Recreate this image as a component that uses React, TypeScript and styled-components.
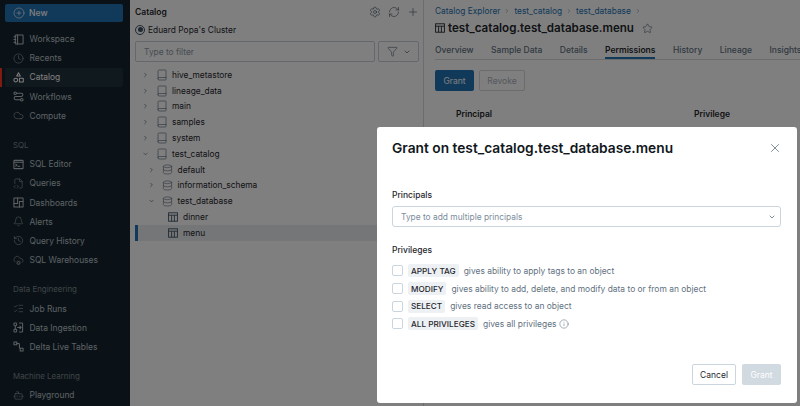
import { createGlobalStyle } from "styled-components";
import styled from "styled-components";
import {
  Bell,
  Book,
  Bot,
  ChevronDown,
  ChevronRight,
  CirclePlus,
  Clock,
  Cloud,
  CloudCog,
  Database,
  FileCode2,
  Filter,
  History,
  Info,
  ListChecks,
  Plus,
  RefreshCw,
  Settings,
  Star,
  X,
} from "lucide-react";
import type { ReactNode } from "react";

const GlobalStyle = createGlobalStyle`
  html, body { margin: 0; padding: 0; background: #fff; }
  body { font-family: Inter, "Liberation Sans", sans-serif; color: #1f272d; }
  * { box-sizing: border-box; }
`;

const Page = styled.div`
  position: relative;
  width: 800px;
  height: 406px;
  overflow: hidden;
  display: grid;
  grid-template-columns: 130px 294px 1fr;
`;

const Sidebar = styled.nav`
  background: #14252f;
  padding: 4px 7px 0 5px;
  display: flex;
  flex-direction: column;
  color: #fff;
`;

const NewButton = styled.div`
  height: 18px;
  flex: none;
  border-radius: 2px;
  background: #2272b4;
  display: flex;
  align-items: center;
  gap: 4px;
  padding-left: 8px;
  font-size: 8.6px;
  font-weight: 500;
  margin-bottom: 7.5px;
`;

const NavItem = styled.div<{ $active?: boolean }>`
  position: relative;
  height: 19.2px;
  flex: none;
  display: flex;
  align-items: center;
  gap: 5.5px;
  padding-left: 8px;
  font-size: 8.45px;
  border-radius: 2px;
  background: ${(p) => (p.$active ? "#21323d" : "transparent")};
  color: ${(p) => (p.$active ? "#ffffff" : "#bcc2c7")};

  &::before {
    content: "";
    display: ${(p) => (p.$active ? "block" : "none")};
    position: absolute;
    left: -5px;
    top: 0;
    bottom: 0;
    width: 1.5px;
    background: #ff3621;
  }
`;

const NavHeading = styled.div`
  height: 19px;
  flex: none;
  margin-top: 10.2px;
  padding-left: 8px;
  display: flex;
  align-items: center;
  font-size: 7.9px;
  color: #808890;
`;

const CatalogPanel = styled.section`
  border-right: 1px solid #d4d8db;
  background: #fff;
  display: flex;
  flex-direction: column;
  padding-top: 5px;
`;

const PanelHeader = styled.div`
  height: 14px;
  margin: 0 4px 0 5px;
  display: flex;
  align-items: center;
  justify-content: space-between;
`;

const PanelTitle = styled.h2`
  margin: 0;
  font-size: 8.5px;
  font-weight: 600;
`;

const PanelTools = styled.div`
  display: flex;
  gap: 7px;
  color: #3d5263;
`;

const ClusterRow = styled.div`
  margin: 3px 5px 0;
  height: 15px;
  display: flex;
  align-items: center;
  gap: 3px;
  font-size: 8.4px;
`;

const ClusterDot = styled.span`
  width: 10px;
  height: 10px;
  border-radius: 50%;
  border: 1px solid #3d5263;
  display: flex;
  align-items: center;
  justify-content: center;

  &::after {
    content: "";
    width: 5px;
    height: 5px;
    border-radius: 50%;
    background: #3d5263;
  }
`;

const FilterRow = styled.div`
  margin: 4px 4px 0 5px;
  display: flex;
  gap: 3px;
`;

const FilterInput = styled.div`
  flex: 1;
  height: 21px;
  border: 1px solid #c9d1d8;
  border-radius: 2px;
  padding-left: 8px;
  display: flex;
  align-items: center;
  font-size: 8.4px;
  color: #8a9aa8;
`;

const FilterButton = styled.div`
  width: 41px;
  height: 21px;
  border: 1px solid #c9d1d8;
  border-radius: 2px;
  display: flex;
  align-items: center;
  justify-content: center;
  gap: 5px;
  color: #3d5263;
`;

const Tree = styled.div`
  margin-top: 5px;
  display: flex;
  flex-direction: column;
`;

const TreeRow = styled.div<{ $depth: number; $selected?: boolean }>`
  position: relative;
  height: 15.8px;
  display: flex;
  align-items: center;
  padding-left: ${(p) => 7 + p.$depth * 5.5}px;
  font-size: 8.4px;
  background: ${(p) => (p.$selected ? "#eaedf0" : "transparent")};
  margin-left: 5px;

  &::before {
    content: "";
    display: ${(p) => (p.$selected ? "block" : "none")};
    position: absolute;
    left: 0;
    top: 0;
    bottom: 0;
    width: 3px;
    background: #2272b4;
  }
`;

const TreeChevron = styled.span`
  width: 7px;
  flex: none;
  display: flex;
  justify-content: center;
  color: #3d5263;
  margin-right: 6px;
`;

const TreeIcon = styled.span`
  width: 13px;
  flex: none;
  display: flex;
  justify-content: center;
  color: #3d5263;
  margin-right: 4px;
`;

const DetailPanel = styled.main`
  background: #fff;
  padding: 4px 0 0 11px;
  min-width: 0;
  display: flex;
  flex-direction: column;
`;

const Crumbs = styled.div`
  height: 14px;
  display: flex;
  align-items: center;
  gap: 4px;
  font-size: 8.35px;
  color: #2272b4;
`;

const CrumbSep = styled.span`
  display: flex;
  color: #5f7281;
`;

const TitleRow = styled.div`
  height: 20px;
  display: flex;
  align-items: center;
  gap: 3px;
`;

const PageTitle = styled.h1`
  margin: 0;
  font-size: 11.6px;
  font-weight: 600;
  margin-right: 5px;
  white-space: nowrap;
`;

const Tabs = styled.div`
  margin-top: 3px;
  height: 19px;
  display: flex;
  gap: 17.5px;
  border-bottom: 1px solid #d4d8db;
  overflow: hidden;
`;

const Tab = styled.div<{ $active?: boolean }>`
  height: 18px;
  padding-top: 2px;
  display: flex;
  align-items: center;
  font-size: 8.5px;
  font-weight: ${(p) => (p.$active ? 600 : 500)};
  color: ${(p) => (p.$active ? "#1f272d" : "#5f7281")};
  border-bottom: ${(p) => (p.$active ? "2px solid #2272b4" : "2px solid transparent")};
  white-space: nowrap;
`;

const Actions = styled.div`
  margin-top: 10px;
  display: flex;
  gap: 5px;
`;

const PrimaryButton = styled.div`
  width: 39px;
  height: 21px;
  border-radius: 2px;
  background: #2272b4;
  color: #fff;
  display: flex;
  align-items: center;
  justify-content: center;
  font-size: 8.5px;
`;

const DisabledOutline = styled.div`
  width: 46px;
  height: 21px;
  border-radius: 2px;
  border: 1px solid #d4d8db;
  color: #a8b2ba;
  display: flex;
  align-items: center;
  justify-content: center;
  font-size: 8.5px;
`;

const TableHead = styled.div`
  margin-top: 18px;
  padding-left: 21px;
  display: grid;
  grid-template-columns: 238px 1fr;
  font-size: 8.5px;
  font-weight: 600;
`;

const Scrim = styled.div`
  position: absolute;
  inset: 0;
  background: rgba(0, 0, 0, 0.5);
`;

const Modal = styled.div`
  position: absolute;
  left: 377px;
  top: 127px;
  width: 420px;
  height: 276px;
  background: #fff;
  border-radius: 3px;
  padding: 10px 16px 0 15px;
  display: flex;
  flex-direction: column;
`;

const ModalHeader = styled.div`
  height: 21px;
  display: flex;
  align-items: center;
  justify-content: space-between;
`;

const ModalTitle = styled.h2`
  margin: 0;
  font-size: 13.75px;
  font-weight: 600;
  color: #11171c;
`;

const CloseButton = styled.span`
  display: flex;
  color: #3d5263;
  margin-right: -1px;
`;

const FieldLabel = styled.div<{ $gap: number }>`
  margin-top: ${(p) => p.$gap}px;
  font-size: 8.5px;
  font-weight: 500;
  height: 12px;
  display: flex;
  align-items: center;
`;

const SelectBox = styled.div`
  margin-top: 5px;
  height: 21px;
  border: 1px solid #cbd5de;
  border-radius: 3px;
  padding: 0 4px 0 8px;
  display: flex;
  align-items: center;
  justify-content: space-between;
  font-size: 8.4px;
  color: #7c8d9c;
`;

const PrivilegeList = styled.div`
  margin-top: 6px;
  display: flex;
  flex-direction: column;
`;

const PrivilegeRow = styled.div`
  height: 17.7px;
  display: flex;
  align-items: center;
  font-size: 8.45px;
  color: #5f7281;
`;

const Checkbox = styled.span`
  width: 11px;
  height: 11px;
  border: 1px solid #cbd5de;
  border-radius: 2px;
  margin-right: 5px;
`;

const PrivilegeTag = styled.span`
  height: 13px;
  padding: 0 3px;
  margin-right: 5px;
  display: flex;
  align-items: center;
  border-radius: 2px;
  background: #eef1f4;
  color: #1f272d;
  font-size: 8.2px;
  font-weight: 500;
`;

const InfoMark = styled.span`
  display: flex;
  margin-left: 2px;
  color: #3d5263;
`;

const ModalFooter = styled.div`
  margin-top: auto;
  margin-bottom: 18px;
  display: flex;
  justify-content: flex-end;
  gap: 6px;
`;

const CancelButton = styled.div`
  width: 44px;
  height: 21px;
  border: 1px solid #cbd5de;
  border-radius: 2px;
  display: flex;
  align-items: center;
  justify-content: center;
  font-size: 8.5px;
`;

const GrantDisabled = styled.div`
  width: 39px;
  height: 21px;
  border-radius: 2px;
  background: #d1d9e1;
  color: #fff;
  display: flex;
  align-items: center;
  justify-content: center;
  font-size: 8.5px;
`;

const svgProps = {
  fill: "none",
  stroke: "currentColor",
  strokeWidth: 1.1,
  strokeLinecap: "round" as const,
  strokeLinejoin: "round" as const,
};

const WorkspaceIcon = () => (
  <svg width="11" height="11" viewBox="0 0 12 12" {...svgProps}>
    <rect x="2.5" y="1" width="8.5" height="10" rx="0.6" />
    <path d="M5 1v10M1 3h2M1 6h2M1 9h2" />
  </svg>
);

const CatalogIcon = () => (
  <svg width="11" height="11" viewBox="0 0 12 12" {...svgProps}>
    <path d="M6 .8 8 4.4H4z" />
    <circle cx="3" cy="8.8" r="2.1" />
    <rect x="7" y="6.8" width="4.2" height="4.2" rx="0.4" />
  </svg>
);

const WorkflowIcon = () => (
  <svg width="11" height="11" viewBox="0 0 12 12" {...svgProps}>
    <circle cx="2.4" cy="2.4" r="1.4" />
    <circle cx="9.6" cy="9.6" r="1.4" />
    <path d="M4 2.4h5a1.8 1.8 0 0 1 0 3.6H3a1.8 1.8 0 0 0 0 3.6h5" />
  </svg>
);

const EditorIcon = () => (
  <svg width="11" height="11" viewBox="0 0 12 12" {...svgProps}>
    <rect x="1" y="1.5" width="10" height="9" rx="0.5" />
    <path d="M1 3.6h10M3 5.6l1.3 1.1L3 7.8M5.4 8h2" />
  </svg>
);

const DashboardIcon = () => (
  <svg width="11" height="11" viewBox="0 0 12 12" {...svgProps}>
    <rect x="1" y="1" width="10" height="10" rx="0.5" />
    <path d="M5 1v6M1 7h4M7 11V5M7 5h4" />
  </svg>
);

const IngestionIcon = () => (
  <svg width="11" height="11" viewBox="0 0 12 12" {...svgProps}>
    <rect x="1" y="1" width="3" height="3" rx="1" />
    <rect x="1" y="8" width="3" height="3" rx="1" />
    <path d="M2.5 4.5v3M7 1h2.5a1 1 0 0 1 1 1v8a1 1 0 0 1-1 1H7M5 6h4M7.5 4.5 9 6 7.5 7.5" />
  </svg>
);

const DeltaIcon = () => (
  <svg width="11" height="11" viewBox="0 0 12 12" {...svgProps}>
    <rect x="1" y="1" width="3.2" height="3.2" />
    <rect x="7.8" y="7.8" width="3.2" height="3.2" />
    <path d="M4.2 2.6H6a1 1 0 0 1 1 1v3.2a1 1 0 0 0 1 1" />
  </svg>
);

const TableIcon = ({ size = 10 }: { size?: number }) => (
  <svg width={size} height={size} viewBox="0 0 10 10" fill="none" stroke="currentColor" strokeWidth="0.9">
    <rect x="0.6" y="0.8" width="8.8" height="8.4" />
    <path d="M.6 3.2h8.8M3.6 3.2v6M6.4 3.2v6" />
  </svg>
);

const navIcon = { size: 11, strokeWidth: 1.1 };

const topNav: [string, ReactNode][] = [
  ["Workspace", <WorkspaceIcon />],
  ["Recents", <Clock {...navIcon} />],
  ["Catalog", <CatalogIcon />],
  ["Workflows", <WorkflowIcon />],
  ["Compute", <Cloud {...navIcon} />],
];

const sections: { title: string; items: [string, ReactNode][] }[] = [
  {
    title: "SQL",
    items: [
      ["SQL Editor", <EditorIcon />],
      ["Queries", <FileCode2 {...navIcon} />],
      ["Dashboards", <DashboardIcon />],
      ["Alerts", <Bell {...navIcon} />],
      ["Query History", <History {...navIcon} />],
      ["SQL Warehouses", <CloudCog {...navIcon} />],
    ],
  },
  {
    title: "Data Engineering",
    items: [
      ["Job Runs", <ListChecks {...navIcon} />],
      ["Data Ingestion", <IngestionIcon />],
      ["Delta Live Tables", <DeltaIcon />],
    ],
  },
  {
    title: "Machine Learning",
    items: [["Playground", <Bot {...navIcon} />]],
  },
];

type Node = { name: string; depth: number; kind: "book" | "db" | "table"; open?: boolean; selected?: boolean };

const nodes: Node[] = [
  { name: "hive_metastore", depth: 0, kind: "book" },
  { name: "lineage_data", depth: 0, kind: "book" },
  { name: "main", depth: 0, kind: "book" },
  { name: "samples", depth: 0, kind: "book" },
  { name: "system", depth: 0, kind: "book" },
  { name: "test_catalog", depth: 0, kind: "book", open: true },
  { name: "default", depth: 1, kind: "db" },
  { name: "information_schema", depth: 1, kind: "db" },
  { name: "test_database", depth: 1, kind: "db", open: true },
  { name: "dinner", depth: 2, kind: "table" },
  { name: "menu", depth: 2, kind: "table", selected: true },
];

const privileges = [
  { tag: "APPLY TAG", text: "gives ability to apply tags to an object" },
  { tag: "MODIFY", text: "gives ability to add, delete, and modify data to or from an object" },
  { tag: "SELECT", text: "gives read access to an object" },
  { tag: "ALL PRIVILEGES", text: "gives all privileges", info: true },
];

const tabs = ["Overview", "Sample Data", "Details", "Permissions", "History", "Lineage", "Insights"];

const App = () => {
  return (
    <Page>
      <GlobalStyle />
      <Sidebar>
        <NewButton>
          <CirclePlus size={12} strokeWidth={1.3} />
          New
        </NewButton>
        {topNav.map(([label, icon]) => (
          <NavItem key={label} $active={label === "Catalog"}>
            {icon}
            {label}
          </NavItem>
        ))}
        {sections.map((section) => (
          <div key={section.title}>
            <NavHeading>{section.title}</NavHeading>
            {section.items.map(([label, icon]) => (
              <NavItem key={label}>
                {icon}
                {label}
              </NavItem>
            ))}
          </div>
        ))}
      </Sidebar>

      <CatalogPanel>
        <PanelHeader>
          <PanelTitle>Catalog</PanelTitle>
          <PanelTools>
            <Settings size={12} strokeWidth={1.2} />
            <RefreshCw size={12} strokeWidth={1.2} />
            <Plus size={12} strokeWidth={1.2} />
          </PanelTools>
        </PanelHeader>
        <ClusterRow>
          <ClusterDot />
          Eduard Popa's Cluster
        </ClusterRow>
        <FilterRow>
          <FilterInput>Type to filter</FilterInput>
          <FilterButton>
            <Filter size={11} strokeWidth={1.2} />
            <ChevronDown size={8} strokeWidth={2} />
          </FilterButton>
        </FilterRow>
        <Tree>
          {nodes.map((node) => (
            <TreeRow key={node.name} $depth={node.depth} $selected={node.selected}>
              <TreeChevron>
                {node.kind !== "table" &&
                  (node.open ? (
                    <ChevronDown size={8} strokeWidth={2} />
                  ) : (
                    <ChevronRight size={8} strokeWidth={2} />
                  ))}
              </TreeChevron>
              <TreeIcon>
                {node.kind === "book" && <Book size={12} strokeWidth={1.1} />}
                {node.kind === "db" && <Database size={11} strokeWidth={1.1} />}
                {node.kind === "table" && <TableIcon />}
              </TreeIcon>
              {node.name}
            </TreeRow>
          ))}
        </Tree>
      </CatalogPanel>

      <DetailPanel>
        <Crumbs>
          Catalog Explorer
          <CrumbSep>
            <ChevronRight size={6} strokeWidth={2} />
          </CrumbSep>
          test_catalog
          <CrumbSep>
            <ChevronRight size={6} strokeWidth={2} />
          </CrumbSep>
          test_database
          <CrumbSep>
            <ChevronRight size={6} strokeWidth={2} />
          </CrumbSep>
        </Crumbs>
        <TitleRow>
          <TableIcon size={10} />
          <PageTitle>test_catalog.test_database.menu</PageTitle>
          <Star size={11} strokeWidth={1.2} color="#3d5263" />
        </TitleRow>
        <Tabs>
          {tabs.map((t) => (
            <Tab key={t} $active={t === "Permissions"}>
              {t}
            </Tab>
          ))}
        </Tabs>
        <Actions>
          <PrimaryButton>Grant</PrimaryButton>
          <DisabledOutline>Revoke</DisabledOutline>
        </Actions>
        <TableHead>
          <span>Principal</span>
          <span>Privilege</span>
        </TableHead>
      </DetailPanel>

      <Scrim />

      <Modal>
        <ModalHeader>
          <ModalTitle>Grant on test_catalog.test_database.menu</ModalTitle>
          <CloseButton>
            <X size={14} strokeWidth={1.1} />
          </CloseButton>
        </ModalHeader>
        <FieldLabel $gap={31}>Principals</FieldLabel>
        <SelectBox>
          Type to add multiple principals
          <ChevronDown size={8} strokeWidth={2} color="#3d5263" />
        </SelectBox>
        <FieldLabel $gap={17}>Privileges</FieldLabel>
        <PrivilegeList>
          {privileges.map((p) => (
            <PrivilegeRow key={p.tag}>
              <Checkbox />
              <PrivilegeTag>{p.tag}</PrivilegeTag>
              {p.text}
              {p.info && (
                <InfoMark>
                  <Info size={10} strokeWidth={1.1} />
                </InfoMark>
              )}
            </PrivilegeRow>
          ))}
        </PrivilegeList>
        <ModalFooter>
          <CancelButton>Cancel</CancelButton>
          <GrantDisabled>Grant</GrantDisabled>
        </ModalFooter>
      </Modal>
    </Page>
  );
};

export default App;
